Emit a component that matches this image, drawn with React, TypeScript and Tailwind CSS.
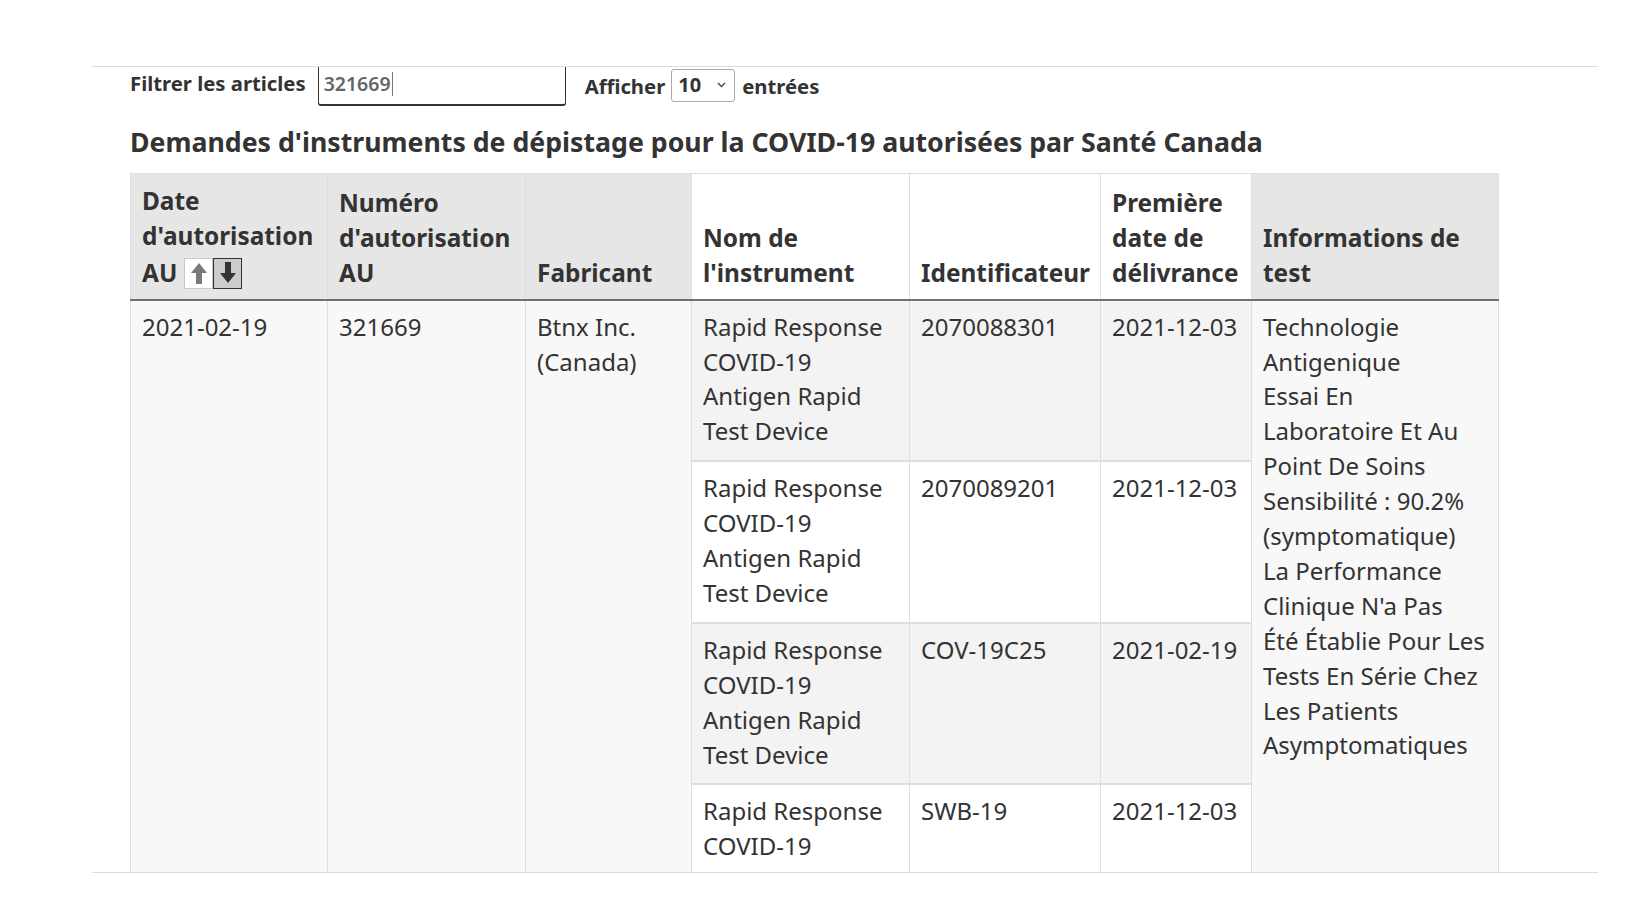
import React from "react";

const font = { fontFamily: '"Noto Sans", "Open Sans", "Liberation Sans", sans-serif' };

function ArrowUp({ color }: { color: string }) {
  return (
    <svg width="20" height="24" viewBox="0 0 20 24">
      <polygon points="10,2 18,12 13,12 13,23 7,23 7,12 2,12" fill={color} />
    </svg>
  );
}
function ArrowDown({ color }: { color: string }) {
  return (
    <svg width="20" height="24" viewBox="0 0 20 24">
      <polygon points="10,22 18,12 13,12 13,1 7,1 7,12 2,12" fill={color} />
    </svg>
  );
}

const rows = [
  { id: "2070088301", date: "2021-12-03", bg: "bg-[#f3f3f3]" },
  { id: "2070089201", date: "2021-12-03", bg: "bg-white" },
  { id: "COV-19C25", date: "2021-02-19", bg: "bg-[#f3f3f3]" },
  { id: "SWB-19", date: "2021-12-03", bg: "bg-white" },
];

export default function App() {
  const th = "border border-[#dedede] border-b-2 border-b-[#707070] px-[11px] pt-[10px] pb-[8px] align-bottom text-left font-bold";
  const td = "border border-[#dedede] px-[11px] pt-[9px] pb-[11px] align-top";
  return (
    <div className="w-[1640px] h-[924px] bg-white overflow-hidden text-[#333]" style={font}>
      <div className="ml-[92px] mt-[66px] w-[1506px] h-[807px] border-y border-[#dcdcdc] overflow-hidden">
        <div className="pl-[38px]">
          <div className="flex items-center h-[42px] -mt-[3px]">
            <span className="text-[20.3px] font-bold leading-none text-[#333] -mt-[3px]">Filtrer les articles</span>
            <div className="ml-[12px] w-[248px] h-[42px] border border-[#333] border-b-2 rounded-[3px] flex items-center pl-[5px]">
              <span className="text-[19.5px] font-semibold text-[#666] leading-none -mt-[2px]">321669</span>
              <span className="w-px h-[24px] bg-[#777] ml-[1px] -mt-[2px]" />
            </div>
            <span className="ml-[19px] text-[20.3px] font-bold leading-none pt-[2px]">Afficher</span>
            <div className="ml-[6px] w-[64px] h-[33px] border border-[#aaa] rounded-[3px] flex items-center pl-[6px] pr-[8px] justify-between">
              <span className="text-[20px] font-bold leading-none">10</span>
              <svg width="9" height="6" viewBox="0 0 9 6"><path d="M1 1 L4.5 4.5 L8 1" stroke="#444" strokeWidth="1.4" fill="none" /></svg>
            </div>
            <span className="ml-[7px] text-[20.3px] font-bold leading-none pt-[2px]">entrées</span>
          </div>
          <h2 className="mt-[21px] text-[26.7px] font-bold leading-[30px] text-[#333]">
            Demandes d'instruments de dépistage pour la COVID-19 autorisées par Santé Canada
          </h2>
          <table className="mt-[16px] table-fixed border-collapse w-[1368px] text-[24px] leading-[34.9px]">
            <colgroup>
              <col className="w-[197px]" />
              <col className="w-[198px]" />
              <col className="w-[166px]" />
              <col className="w-[218px]" />
              <col className="w-[191px]" />
              <col className="w-[151px]" />
              <col className="w-[247px]" />
            </colgroup>
            <thead>
              <tr>
                <th className={`${th} bg-[#e6e6e6] text-[24.4px]`}>
                  Date<br />d'autorisation<br />
                  <span className="inline-flex items-center align-middle">
                    AU
                    <span className="ml-[7px] inline-flex">
                      <span className="w-[29px] h-[31px] bg-white border border-[#c8c8c8] flex items-center justify-center">
                        <ArrowUp color="#7a7a7a" />
                      </span>
                      <span className="w-[29px] h-[31px] bg-[#cccccc] border border-[#333] flex items-center justify-center">
                        <ArrowDown color="#333" />
                      </span>
                    </span>
                  </span>
                </th>
                <th className={`${th} bg-[#e6e6e6] text-[24.4px]`}>Numéro<br />d'autorisation<br />AU</th>
                <th className={`${th} bg-[#e6e6e6] text-[24.4px]`}>Fabricant</th>
                <th className={`${th} bg-white text-[24.4px]`}>Nom de<br />l'instrument</th>
                <th className={`${th} bg-white text-[24.4px]`}>Identificateur</th>
                <th className={`${th} bg-white text-[24.4px]`}>Première<br />date de<br />délivrance</th>
                <th className={`${th} bg-[#e6e6e6] text-[24.4px]`}>Informations de<br />test</th>
              </tr>
            </thead>
            <tbody>
              {rows.map((r, i) => (
                <tr key={r.id}>
                  {i === 0 && (
                    <>
                      <td rowSpan={4} className={`${td} bg-[#f8f8f8]`}>2021-02-19</td>
                      <td rowSpan={4} className={`${td} bg-[#f8f8f8]`}>321669</td>
                      <td rowSpan={4} className={`${td} bg-[#f8f8f8]`}>Btnx Inc.<br />(Canada)</td>
                    </>
                  )}
                  <td className={`${td} ${r.bg} border-t-2`}>Rapid Response<br />COVID-19<br />Antigen Rapid<br />Test Device</td>
                  <td className={`${td} ${r.bg} border-t-2`}>{r.id}</td>
                  <td className={`${td} ${r.bg} border-t-2`}>{r.date}</td>
                  {i === 0 && (
                    <td rowSpan={4} className={`${td} bg-[#f8f8f8] whitespace-nowrap`}>
                      Technologie<br />Antigenique<br />Essai En<br />Laboratoire Et Au<br />Point De Soins<br />
                      Sensibilité : 90.2%<br />(symptomatique)<br />La Performance<br />Clinique N'a Pas<br />
                      Été Établie Pour Les<br />Tests En Série Chez<br />Les Patients<br />Asymptomatiques
                    </td>
                  )}
                </tr>
              ))}
            </tbody>
          </table>
        </div>
      </div>
    </div>
  );
}
